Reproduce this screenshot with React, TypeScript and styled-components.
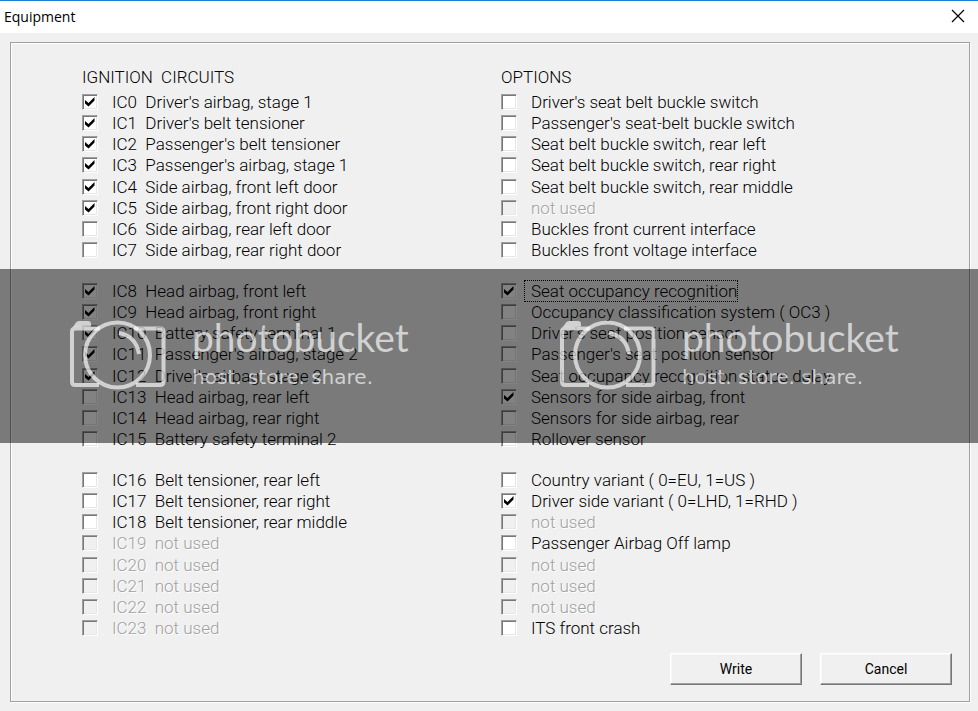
import React, { useState } from "react";
import styled, { createGlobalStyle } from "styled-components";

const GlobalStyle = createGlobalStyle`
  * { box-sizing: border-box; }
  body { margin: 0; background: #f0f0f0; }
`;

const Window = styled.main`
  position: relative;
  display: flex;
  flex-direction: column;
  min-height: 100vh;
  border-top: 1px solid #1a7fd4;
  background: #f0f0f0;
  color: #000;
  font-family: Roboto, "Liberation Sans", Arial, sans-serif;
  font-size: 17px;
  font-weight: 300;
`;

const TitleBar = styled.header`
  display: flex;
  align-items: center;
  justify-content: space-between;
  height: 32px;
  padding: 0 13px 0 4px;
  background: #fff;
`;

const Title = styled.h1`
  margin: 0;
  font: 400 14px/20px "Open Sans", sans-serif;
`;

const CloseButton = styled.button`
  display: flex;
  padding: 0 0 2px;
  border: 0;
  background: none;
`;

const Panel = styled.form`
  flex: 1;
  display: flex;
  flex-direction: column;
  margin: 9px 8px 9px 10px;
  padding: 25px 17px 16px 71px;
  border: 1px solid #a0a0a0;
  box-shadow: 1px 1px 0 #fff, inset 1px 1px 0 #fff;
`;

const Columns = styled.div`
  display: grid;
  grid-template-columns: 419px 1fr;
`;

const Column = styled.section`
  display: flex;
  flex-direction: column;
`;

const Heading = styled.h2`
  margin: 0 0 5px;
  font-size: 17px;
  font-weight: 300;
  line-height: 18px;
  white-space: pre;
`;

const Groups = styled.div`
  display: flex;
  flex-direction: column;
  gap: 19px;
`;

const Group = styled.div`
  display: grid;
  grid-template-rows: repeat(8, 1fr);
  height: 170px;
`;

const Option = styled.label<{ $disabled?: boolean }>`
  display: flex;
  align-items: center;
  gap: 8px;
  color: ${(p) => (p.$disabled ? "#a0a0a0" : "#000")};
  text-shadow: ${(p) => (p.$disabled ? "1px 1px 0 #fff" : "none")};
`;

const CheckBox = styled.span`
  display: grid;
  width: 16px;
  height: 16px;
  > * { grid-area: 1 / 1; }
  > svg { visibility: hidden; margin: 2px; }
  > input:checked + svg { visibility: visible; }
`;

const CheckInput = styled.input`
  appearance: none;
  width: 16px;
  height: 16px;
  margin: 0;
  border: 1px solid;
  border-color: #a0a0a0 #fff #fff #a0a0a0;
  background: #fff;
  box-shadow: inset 1px 1px 0 #777, inset -1px -1px 0 #e6e6e6;
  outline: none;
  &:disabled { background: #f0f0f0; }
`;

const Caption = styled.span<{ $focused?: boolean }>`
  padding: 0 0 0 6px;
  line-height: 20px;
  white-space: pre;
  outline: ${(p) => (p.$focused ? "1px dotted #000" : "none")};
`;

const Actions = styled.footer`
  display: flex;
  justify-content: flex-end;
  gap: 18px;
  margin-top: auto;
`;

const PushButton = styled.button`
  width: 132px;
  height: 32px;
  padding: 0;
  border: 1px solid;
  border-color: #fff #777 #777 #fff;
  background: #f0f0f0;
  box-shadow: inset -1px -1px 0 #a0a0a0, inset 1px 1px 0 #f8f8f8;
  color: #000;
  font: 400 14px/18px Roboto, "Liberation Sans", Arial, sans-serif;
`;

const Watermark = styled.div`
  position: absolute;
  top: 268px;
  left: 0;
  right: 0;
  height: 174px;
  display: grid;
  grid-template-columns: 490px 490px;
  overflow: hidden;
  background: rgba(0, 0, 0, 0.49);
  color: rgba(255, 255, 255, 0.66);
  pointer-events: none;
`;

const Brand = styled.div`
  display: flex;
  align-items: flex-start;
  gap: 24px;
  padding: 50px 0 0 68px;
`;

const BrandText = styled.div`
  display: flex;
  flex-direction: column;
`;

const BrandName = styled.span`
  font: 400 39px/36px Lato, sans-serif;
`;

const BrandTagline = styled.span`
  font: 400 20px/44px "DejaVu Sans", sans-serif;
`;

type Item = { text: string; checked?: boolean; disabled?: boolean; focused?: boolean };

const on = (text: string): Item => ({ text, checked: true });
const off = (text: string): Item => ({ text });
const unused = (text: string): Item => ({ text, disabled: true });

const circuits: Item[][] = [
  [
    on("IC0  Driver's airbag, stage 1"),
    on("IC1  Driver's belt tensioner"),
    on("IC2  Passenger's belt tensioner"),
    on("IC3  Passenger's airbag, stage 1"),
    on("IC4  Side airbag, front left door"),
    on("IC5  Side airbag, front right door"),
    off("IC6  Side airbag, rear left door"),
    off("IC7  Side airbag, rear right door"),
  ],
  [
    on("IC8  Head airbag, front left"),
    on("IC9  Head airbag, front right"),
    on("IC10  Battery safety terminal 1"),
    on("IC11  Passenger's airbag, stage 2"),
    on("IC12  Driver's airbag, stage 2"),
    off("IC13  Head airbag, rear left"),
    off("IC14  Head airbag, rear right"),
    off("IC15  Battery safety terminal 2"),
  ],
  [
    off("IC16  Belt tensioner, rear left"),
    off("IC17  Belt tensioner, rear right"),
    off("IC18  Belt tensioner, rear middle"),
    unused("IC19  not used"),
    unused("IC20  not used"),
    unused("IC21  not used"),
    unused("IC22  not used"),
    unused("IC23  not used"),
  ],
];

const options: Item[][] = [
  [
    off("Driver's seat belt buckle switch"),
    off("Passenger's seat-belt buckle switch"),
    off("Seat belt buckle switch, rear left"),
    off("Seat belt buckle switch, rear right"),
    off("Seat belt buckle switch, rear middle"),
    unused("not used"),
    off("Buckles front current interface"),
    off("Buckles front voltage interface"),
  ],
  [
    { text: "Seat occupancy recognition", checked: true, focused: true },
    off("Occupancy classification system ( OC3 )"),
    off("Driver's seat position sensor"),
    off("Passenger's seat position sensor"),
    off("Seat occupancy recognition status delay"),
    on("Sensors for side airbag, front"),
    off("Sensors for side airbag, rear"),
    off("Rollover sensor"),
  ],
  [
    off("Country variant ( 0=EU, 1=US )"),
    on("Driver side variant ( 0=LHD, 1=RHD )"),
    unused("not used"),
    off("Passenger Airbag Off lamp"),
    unused("not used"),
    unused("not used"),
    unused("not used"),
    off("ITS front crash"),
  ],
];

function OptionRow({ item }: { item: Item }) {
  const [checked, setChecked] = useState(!!item.checked);
  return (
    <Option $disabled={item.disabled}>
      <CheckBox>
        <CheckInput
          type="checkbox"
          checked={checked}
          disabled={item.disabled}
          onChange={(e) => setChecked(e.target.checked)}
        />
        <svg width="12" height="12" viewBox="0 0 12 12" aria-hidden="true">
          <path d="M1 4 L4.500 7 L10.500 1 V4.500 L4.500 10.500 L1 7.500 Z" fill="#000" />
        </svg>
      </CheckBox>
      <Caption $focused={item.focused}>{item.text}</Caption>
    </Option>
  );
}

function OptionColumn({ title, groups }: { title: string; groups: Item[][] }) {
  return (
    <Column>
      <Heading>{title}</Heading>
      <Groups>
        {groups.map((items, g) => (
          <Group key={g}>
            {items.map((item, i) => (
              <OptionRow key={i} item={item} />
            ))}
          </Group>
        ))}
      </Groups>
    </Column>
  );
}

function CameraBrand() {
  return (
    <Brand>
      <svg width="100" height="74" viewBox="0 0 100 74" fill="none" stroke="currentColor" aria-hidden="true">
        <path
          d="M32 9.500 H7 Q4 9.500 4 13 V62.500 Q4 66 7 66 H31 M68 66 H92 Q95.500 66 95.500 62.500 V13 Q95.500 9.500 92 9.500 H66"
          strokeWidth="4"
        />
        <path d="M5 8 L8 3.500 Q9 2 11 2 H20 Q23 2 23 5 V7.500 Z" fill="currentColor" stroke="none" />
        <circle cx="49.500" cy="36" r="32.500" strokeWidth="4" />
        <path d="M51 14 Q68 17 71 35" strokeWidth="4" />
      </svg>
      <BrandText>
        <BrandName>photobucket</BrandName>
        <BrandTagline>host. store. share.</BrandTagline>
      </BrandText>
    </Brand>
  );
}

export default function App() {
  return (
    <>
      <GlobalStyle />
      <Window>
        <TitleBar>
          <Title>Equipment</Title>
          <CloseButton type="button" aria-label="Close">
            <svg width="14" height="14" viewBox="0 0 14 14" stroke="#000" strokeWidth="1.2" aria-hidden="true">
              <path d="M1 1 L13 13 M13 1 L1 13" />
            </svg>
          </CloseButton>
        </TitleBar>
        <Panel onSubmit={(e) => e.preventDefault()}>
          <Columns>
            <OptionColumn title="IGNITION  CIRCUITS" groups={circuits} />
            <OptionColumn title="OPTIONS" groups={options} />
          </Columns>
          <Actions>
            <PushButton type="submit">Write</PushButton>
            <PushButton type="button">Cancel</PushButton>
          </Actions>
        </Panel>
        <Watermark>
          <CameraBrand />
          <CameraBrand />
        </Watermark>
      </Window>
    </>
  );
}
